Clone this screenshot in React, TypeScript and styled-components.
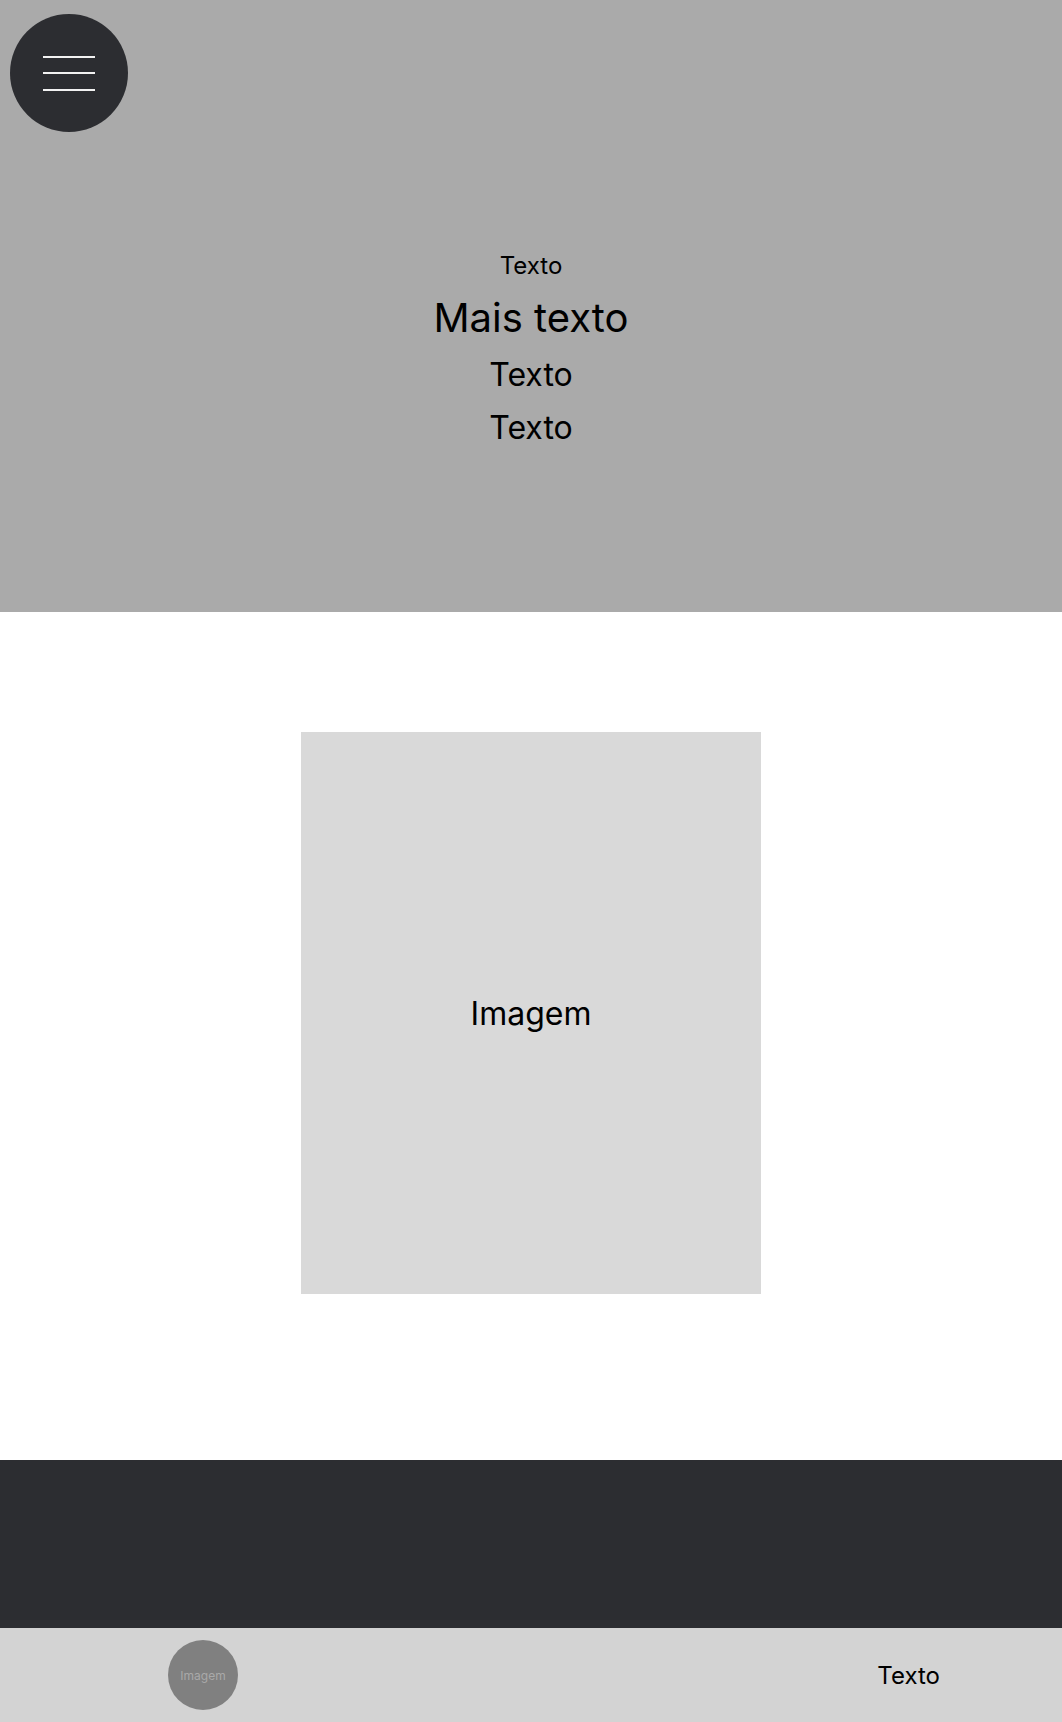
import { createGlobalStyle, styled } from "styled-components";

const GlobalStyle = createGlobalStyle`
  * { box-sizing: border-box; }
  body {
    margin: 0;
    font-family: Inter, "Noto Sans", sans-serif;
    color: #000;
  }
`

const Hero = styled.section`
  height: 612px;
  background-color: #aaaaaa;
  padding: 14px 10px 0;
  display: flex;
  flex-direction: column;
`
const MenuButton = styled.button`
  width: 118px;
  height: 118px;
  border-radius: 50%;
  border: none;
  background-color: #2c2d31;
  display: flex;
  flex-direction: column;
  align-items: center;
  justify-content: center;
  gap: 14.5px;
  padding: 0;
  cursor: pointer;
  span {
    display: block;
    width: 52px;
    height: 2px;
    background-color: #f2f2f2;
  }
`
const HeroText = styled.div`
  margin-top: 119px;
  display: flex;
  flex-direction: column;
  align-items: center;
  gap: 13.5px;
`
const Line = styled.div<{ size: number }>`
  font-size: ${({ size }) => size}px;
  line-height: ${({ size }) => Math.round(size * 1.21)}px;
  color: #000;
`

const ImageSection = styled.section`
  background-color: #fff;
  padding: 120px 0 166px;
  display: flex;
  justify-content: center;
`
const ImageBox = styled.div`
  width: 460px;
  height: 562px;
  background-color: #d9d9d9;
  display: flex;
  align-items: center;
  justify-content: center;
  font-size: 32px;
`

const DarkBand = styled.section`
  height: 168px;
  background-color: #2c2d31;
`

const Footer = styled.footer`
  height: 94px;
  background-color: #d3d3d3;
  display: flex;
  align-items: center;
  justify-content: space-between;
  padding: 0 122px 0 168px;
`
const Avatar = styled.div`
  width: 70px;
  height: 70px;
  border-radius: 50%;
  background-color: #808080;
  color: #a9a9a9;
  font-size: 12px;
  display: flex;
  align-items: center;
  justify-content: center;
`
const FooterText = styled.div`
  font-size: 24px;
`

export default function App() {
  return (
    <>
      <GlobalStyle />
      <Hero>
        <MenuButton aria-label="menu">
          <span />
          <span />
          <span />
        </MenuButton>
        <HeroText>
          <Line size={24}>Texto</Line>
          <Line size={40}>Mais texto</Line>
          <Line size={32}>Texto</Line>
          <Line size={32}>Texto</Line>
        </HeroText>
      </Hero>
      <ImageSection>
        <ImageBox>Imagem</ImageBox>
      </ImageSection>
      <DarkBand />
      <Footer>
        <Avatar>Imagem</Avatar>
        <FooterText>Texto</FooterText>
      </Footer>
    </>
  )
}
